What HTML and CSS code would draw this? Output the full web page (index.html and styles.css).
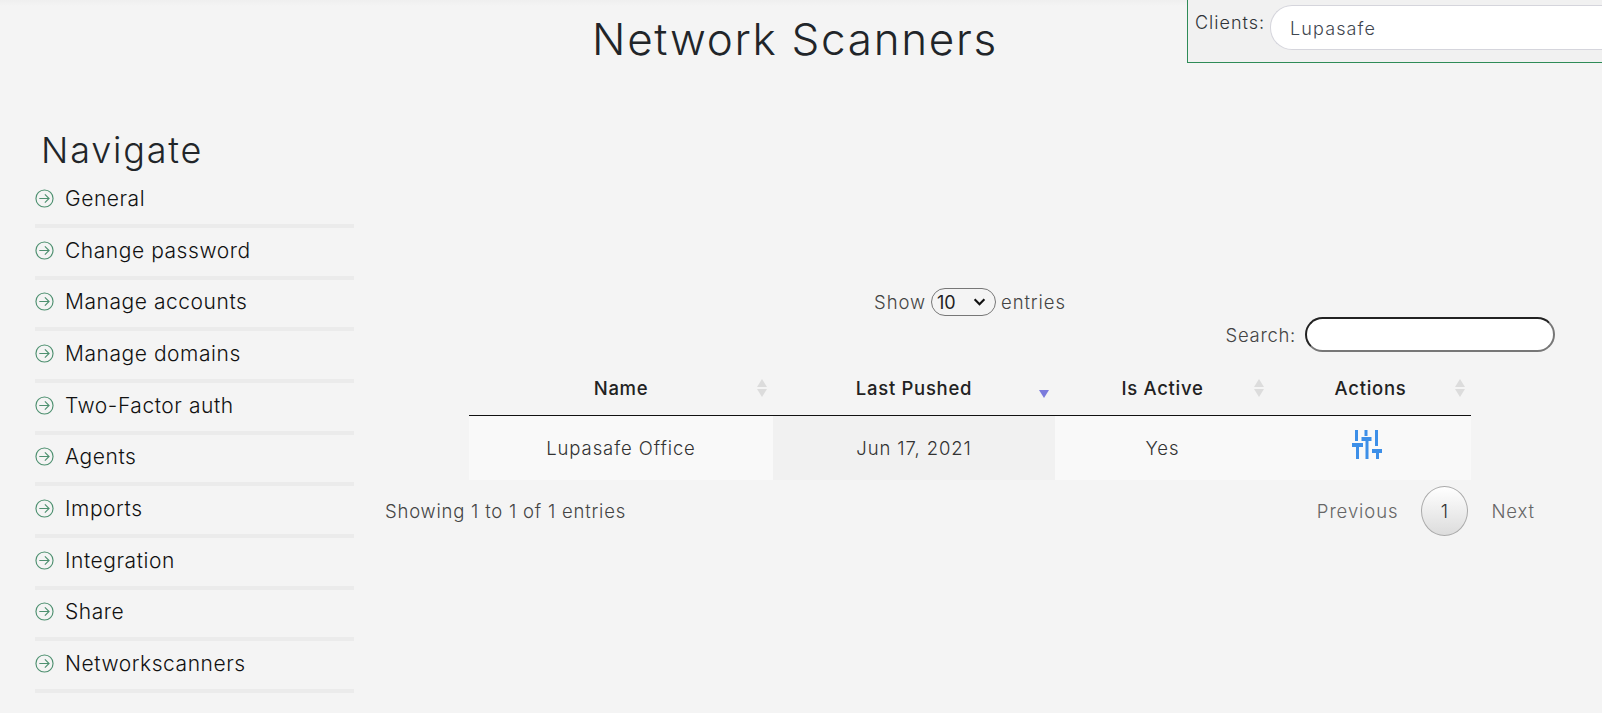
FILE: index.html
```html
<!DOCTYPE html>
<html lang="en">
<head>
    <meta charset="UTF-8">
    <meta name="viewport" content="width=device-width, initial-scale=1.0">
    <title>Network Scanners</title>
    <link rel="stylesheet" href="styles.css">
</head>
<body>
    <header class="top-bar">
        <h1 class="page-title">Network Scanners</h1>
        <div class="client-picker">
            <label class="client-label" for="client">Clients:</label>
            <div class="client-input" id="client">Lupasafe</div>
        </div>
    </header>

    <div class="layout">
        <nav class="sidebar">
            <h2 class="sidebar-title">Navigate</h2>
            <ul class="nav-list">
                <li class="nav-item"><svg class="nav-icon" viewBox="0 0 20 20"><circle cx="10" cy="10" r="9"/><path d="M4.500 10h10M10.400 5.600l4.400 4.400-4.400 4.400"/></svg>General</li>
                <li class="nav-item"><svg class="nav-icon" viewBox="0 0 20 20"><circle cx="10" cy="10" r="9"/><path d="M4.500 10h10M10.400 5.600l4.400 4.400-4.400 4.400"/></svg>Change password</li>
                <li class="nav-item"><svg class="nav-icon" viewBox="0 0 20 20"><circle cx="10" cy="10" r="9"/><path d="M4.500 10h10M10.400 5.600l4.400 4.400-4.400 4.400"/></svg>Manage accounts</li>
                <li class="nav-item"><svg class="nav-icon" viewBox="0 0 20 20"><circle cx="10" cy="10" r="9"/><path d="M4.500 10h10M10.400 5.600l4.400 4.400-4.400 4.400"/></svg>Manage domains</li>
                <li class="nav-item"><svg class="nav-icon" viewBox="0 0 20 20"><circle cx="10" cy="10" r="9"/><path d="M4.500 10h10M10.400 5.600l4.400 4.400-4.400 4.400"/></svg>Two-Factor auth</li>
                <li class="nav-item"><svg class="nav-icon" viewBox="0 0 20 20"><circle cx="10" cy="10" r="9"/><path d="M4.500 10h10M10.400 5.600l4.400 4.400-4.400 4.400"/></svg>Agents</li>
                <li class="nav-item"><svg class="nav-icon" viewBox="0 0 20 20"><circle cx="10" cy="10" r="9"/><path d="M4.500 10h10M10.400 5.600l4.400 4.400-4.400 4.400"/></svg>Imports</li>
                <li class="nav-item"><svg class="nav-icon" viewBox="0 0 20 20"><circle cx="10" cy="10" r="9"/><path d="M4.500 10h10M10.400 5.600l4.400 4.400-4.400 4.400"/></svg>Integration</li>
                <li class="nav-item"><svg class="nav-icon" viewBox="0 0 20 20"><circle cx="10" cy="10" r="9"/><path d="M4.500 10h10M10.400 5.600l4.400 4.400-4.400 4.400"/></svg>Share</li>
                <li class="nav-item"><svg class="nav-icon" viewBox="0 0 20 20"><circle cx="10" cy="10" r="9"/><path d="M4.500 10h10M10.400 5.600l4.400 4.400-4.400 4.400"/></svg>Networkscanners</li>
            </ul>
        </nav>

        <main class="content">
            <div class="table-length">
                Show
                <div class="select-wrap">
                    <select class="length-select">
                        <option>10</option>
                        <option>25</option>
                    </select>
                    <svg class="select-arrow" viewBox="0 0 14 9"><path d="M1.500 1.500L7 7l5.500-5.500"/></svg>
                </div>
                entries
            </div>
            <div class="table-search">
                <label for="search">Search:</label>
                <input class="search-input" type="text" id="search">
            </div>

            <table class="scanner-table">
                <thead>
                    <tr>
                        <th class="col-name">Name<svg class="sort-icon" viewBox="0 0 10 18"><path d="M5 0l5 8H0z"/><path d="M5 18l5-8H0z"/></svg></th>
                        <th class="col-pushed">Last Pushed<svg class="sort-icon sort-active" viewBox="0 0 10 18"><path d="M5 18l5-8H0z"/></svg></th>
                        <th class="col-active">Is Active<svg class="sort-icon" viewBox="0 0 10 18"><path d="M5 0l5 8H0z"/><path d="M5 18l5-8H0z"/></svg></th>
                        <th class="col-actions">Actions<svg class="sort-icon" viewBox="0 0 10 18"><path d="M5 0l5 8H0z"/><path d="M5 18l5-8H0z"/></svg></th>
                    </tr>
                </thead>
                <tbody>
                    <tr>
                        <td>Lupasafe Office</td>
                        <td class="sorted-cell">Jun 17, 2021</td>
                        <td>Yes</td>
                        <td class="action-cell">
                            <svg class="action-icon" viewBox="0 0 30 29"><path d="M3 0h3v11H3zM0 13h11v4H7v12H4V17H0zM12.500 0h3v6h-3zM9.500 7h10v4h-3v18h-3V11h-4zM23 0h3v16h-3zM20 19h10v4h-3v6h-3v-6h-4z"/></svg>
                        </td>
                    </tr>
                </tbody>
            </table>

            <div class="table-footer">
                <div class="table-info">Showing 1 to 1 of 1 entries</div>
                <div class="pagination">
                    <span class="page-link">Previous</span>
                    <span class="page-current">1</span>
                    <span class="page-link">Next</span>
                </div>
            </div>
        </main>
    </div>
</body>
</html>
```

FILE: styles.css
```css
* {
    box-sizing: border-box;
}

html,
body {
    height: 100%;
}

body {
    margin: 0;
    overflow: hidden;
    font-family: Inter, "Open Sans", sans-serif;
    background: #f4f4f4;
    color: #333;
}

.top-bar {
    display: grid;
    height: 122px;
    background: linear-gradient(#efefef, #f4f4f4 6px);
}

.page-title {
    grid-area: 1 / 1;
    align-self: start;
    width: 1590px;
    margin: 12px 0 0;
    text-align: center;
    font-size: 44px;
    line-height: 54px;
    font-weight: 300;
    letter-spacing: 1.7px;
    color: #212529;
}

.client-picker {
    grid-area: 1 / 1;
    justify-self: end;
    align-self: start;
    display: flex;
    width: 415px;
    height: 63px;
    padding: 5px 0 0 7px;
    background: #f1f1f1;
    border-left: 1px solid #2e8b57;
    border-bottom: 1px solid #2e8b57;
}

.client-label {
    margin: 8px 5px 0 0;
    font-size: 18px;
    line-height: 20px;
    font-weight: 300;
    letter-spacing: 1px;
    color: #2f3438;
}

.client-input {
    flex: 1;
    height: 45px;
    padding-left: 19px;
    line-height: 46px;
    font-size: 18px;
    font-weight: 300;
    letter-spacing: 1.1px;
    color: #3f4650;
    background: #fff;
    border: 1px solid #d5d5dc;
    border-right: 0;
    border-radius: 22px 0 0 22px;
}

.layout {
    display: flex;
    align-items: flex-start;
    padding-left: 35px;
}

.sidebar {
    width: 319px;
    flex-shrink: 0;
}

.sidebar-title {
    margin: 6px 0 0 6px;
    font-size: 36px;
    line-height: 44px;
    font-weight: 300;
    letter-spacing: 1.8px;
    color: #212529;
}

.nav-list {
    list-style: none;
    margin: 4.500px 0 0;
    padding: 0;
}

.nav-item {
    display: flex;
    align-items: flex-start;
    gap: 11px;
    height: 51.67px;
    padding-top: 8.500px;
    font-size: 21px;
    line-height: 28px;
    font-weight: 300;
    letter-spacing: 0.55px;
    color: #111;
    border-bottom: 4px solid #ebebeb;
}

.nav-icon {
    width: 19px;
    height: 19px;
    margin-top: 4px;
    flex-shrink: 0;
    fill: none;
    stroke: #4e9070;
    stroke-width: 1.2;
}

.content {
    flex: 1;
    margin: 166px 47px 0 31px;
    font-size: 18.500px;
    font-weight: 300;
    letter-spacing: 0.9px;
    color: #444;
}

.table-length {
    display: flex;
    justify-content: center;
    align-items: center;
    gap: 5px;
    height: 28px;
}

.select-wrap {
    position: relative;
    display: flex;
}

.length-select {
    appearance: none;
    width: 65px;
    height: 28px;
    padding: 0 0 0 5px;
    font-family: inherit;
    font-size: 18px;
    color: #222;
    background: #f4f4f4;
    border: 1px solid #777;
    border-radius: 14px;
}

.select-arrow {
    position: absolute;
    right: 10px;
    top: 10px;
    width: 13px;
    height: 8px;
    fill: none;
    stroke: #111;
    stroke-width: 2.400;
    pointer-events: none;
}

.table-search {
    display: flex;
    justify-content: flex-end;
    align-items: center;
    gap: 9px;
    height: 35px;
    margin-top: 1px;
}

.table-search label {
    letter-spacing: 0.7px;
}

.search-input {
    width: 250px;
    height: 35px;
    background: #fff;
    border: 2px solid;
    border-color: #222 #777 #777 #222;
    border-radius: 18px;
}

.scanner-table {
    width: 1002px;
    margin: 0 auto;
    margin-top: 11px;
    border-collapse: collapse;
    table-layout: fixed;
}

.scanner-table th {
    position: relative;
    height: 52px;
    padding: 0;
    padding-bottom: 1px;
    font-size: 18.500px;
    font-weight: 500;
    letter-spacing: 0.7px;
    color: #222;
    border-bottom: 1px solid #111;
}

.col-name {
    width: 304px;
}

.col-pushed {
    width: 282px;
}

.col-active {
    width: 215px;
}

.scanner-table td {
    height: 65px;
    padding: 0;
    padding-top: 1px;
    text-align: center;
    background: #f9f9f9;
    color: #333;
}

.scanner-table .sorted-cell {
    background: #f1f1f1;
}

.sort-icon {
    position: absolute;
    right: 6px;
    top: 16px;
    width: 10px;
    height: 18px;
    fill: #dcdcdc;
}

.sort-active {
    fill: #7b7bdc;
    top: 17px;
}

.action-icon {
    display: block;
    width: 30px;
    height: 29px;
    margin: -7px auto 0;
    position: relative;
    left: -4px;
    fill: #3d8fe8;
}

.table-footer {
    display: flex;
    justify-content: space-between;
    align-items: center;
    height: 56px;
    padding: 6px 20px 0 0;
}

.table-info {
    letter-spacing: 0.78px;
}

.pagination {
    display: flex;
    align-items: center;
    gap: 23px;
}

.page-link {
    color: #666;
}

.page-current {
    display: flex;
    justify-content: center;
    align-items: center;
    width: 47px;
    height: 50px;
    border: 1px solid #aaa;
    border-radius: 50%;
    color: #333;
    background: linear-gradient(#fff, #dcdcdc);
}
```
